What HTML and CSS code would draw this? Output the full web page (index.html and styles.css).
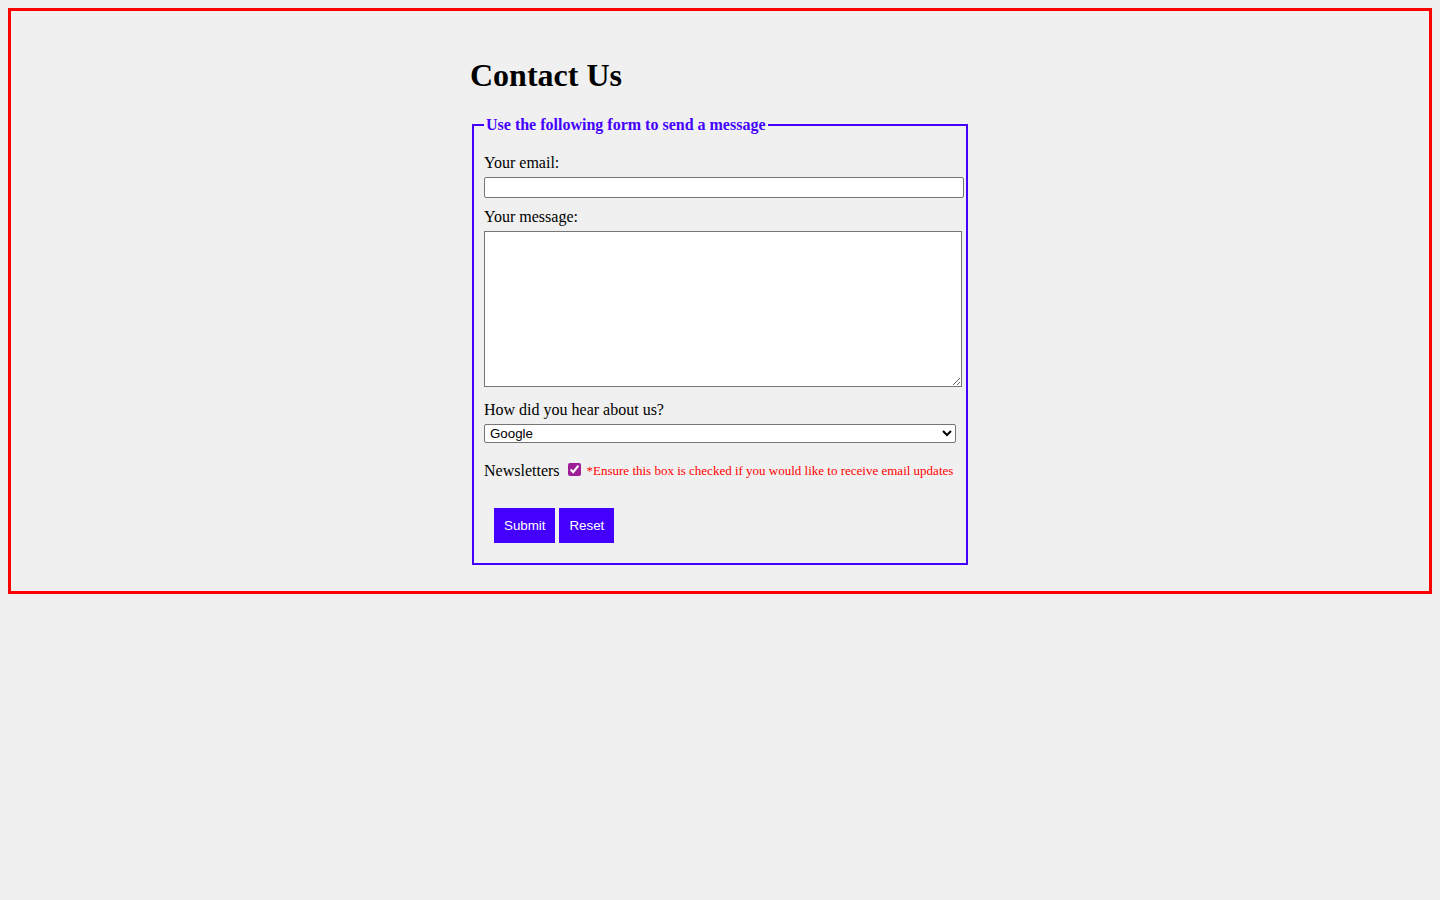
FILE: index.html
```html
<!DOCTYPE html>
<html lang="en">
<head>
<meta charset="utf-8">
<title>Contact Us</title>
<link rel="stylesheet" href="styles.css">
</head>
<body>
<div class="page">
  <div class="content">
    <h1 class="title">Contact Us</h1>
    <form class="contact-form">
      <fieldset class="form-box">
        <legend class="form-legend">Use the following form to send a message</legend>
        <div class="field">
          <label class="field-label" for="email">Your email:</label>
          <input class="text-input" type="email" id="email">
        </div>
        <div class="field">
          <label class="field-label" for="message">Your message:</label>
          <textarea class="text-area" id="message"></textarea>
        </div>
        <div class="field field-select">
          <label class="field-label" for="source">How did you hear about us?</label>
          <select class="select-input" id="source">
            <option>Google</option>
            <option>Friend</option>
            <option>Other</option>
          </select>
        </div>
        <div class="field-check">
          <label class="check-label" for="news">Newsletters</label>
          <input class="check-input" type="checkbox" id="news" checked>
          <span class="check-note">*Ensure this box is checked if you would like to receive email updates</span>
        </div>
        <div class="actions">
          <button class="btn" type="submit">Submit</button>
          <button class="btn" type="reset">Reset</button>
        </div>
      </fieldset>
    </form>
  </div>
</div>
</body>
</html>
```
FILE: styles.css
```css
html, body {
  background: #f0f0f0;
}
body {
  margin: 8px;
  font-family: "Liberation Serif", "Times New Roman", serif;
  font-size: 16px;
  color: #000;
}
.page {
  border: 3px solid #ff0000;
  padding: 25px 0 26px;
}
.content {
  width: 500px;
  margin: 0 auto;
}
.title {
  font-size: 32px;
  font-weight: bold;
  margin: 21px 0 22px;
}
.contact-form {
  margin: 0;
}
.form-box {
  margin: 0 2px;
  border: 2px solid #4400ff;
  padding: 19px 10px 20px;
}
.form-legend {
  color: #4400ff;
  font-weight: bold;
  font-size: 16px;
  padding: 0 2px;
}
.field {
  display: flex;
  flex-direction: column;
  align-items: flex-start;
  margin-bottom: 9px;
}
.field-label {
  line-height: 20px;
  margin-bottom: 4px;
}
.text-input {
  box-sizing: content-box;
  width: 100%;
  height: 15px;
  border: 1px solid #767676;
  border-radius: 2px;
  background: #fff;
  margin: 0;
  padding: 2px 3px;
}
.text-area {
  box-sizing: content-box;
  width: 100%;
  height: 150px;
  padding: 2px;
  border: 1px solid #767676;
  background: #fff;
  margin: 0 0 4px;
}
.select-input {
  box-sizing: border-box;
  width: 100%;
  height: 19px;
  font-family: "Liberation Sans", Arial, sans-serif;
  font-size: 13.33px;
  border: 1px solid #767676;
  border-radius: 2px;
  background: #fff;
  margin: 0;
  padding: 0 1px;
}
.field-select {
  margin-bottom: 18px;
}
.field-check {
  display: flex;
  align-items: center;
  line-height: 20px;
}
.check-label {
  margin-right: 4px;
}
.check-input {
  accent-color: #9d1f98;
  width: 13px;
  height: 13px;
  margin: 0 6px 4px 4px;
}
.check-note {
  color: #ff0000;
  font-size: 13px;
}
.actions {
  display: flex;
  gap: 4px;
  margin: 27px 0 0 10px;
}
.btn {
  background: #4400ff;
  color: #fff;
  border: none;
  padding: 10px;
  font-family: "Liberation Sans", Arial, sans-serif;
  font-size: 13.33px;
  line-height: 15px;
  cursor: pointer;
}
```
